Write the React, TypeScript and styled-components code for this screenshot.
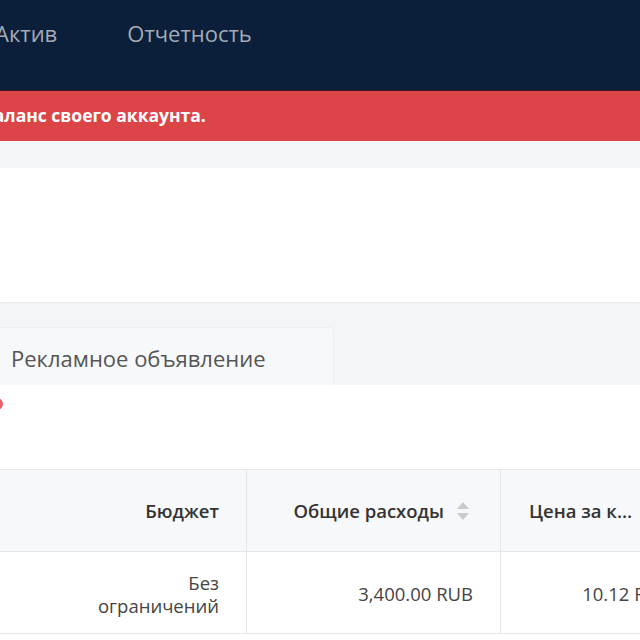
import React from 'react';
import styled, { createGlobalStyle } from 'styled-components';

const GlobalStyle = createGlobalStyle`
  html, body {
    margin: 0;
    padding: 0;
    background: #f4f5f8;
    font-family: 'Open Sans', 'Noto Sans', sans-serif;
  }
  * {
    box-sizing: border-box;
  }
`;

const Page = styled.div`
  width: 640px;
  height: 640px;
  overflow: hidden;
  background: #f4f5f8;
`;

const NavBar = styled.div`
  height: 91px;
  background: #0b1f3b;
  display: flex;
  align-items: center;
  gap: 70px;
  padding-bottom: 24px;
  border-bottom: 1px solid #3a1624;
`;

const NavItem = styled.div<{ $shift?: number }>`
  color: #a3abb5;
  font-size: 22px;
  margin-left: ${(p) => p.$shift || 0}px;
  white-space: nowrap;
`;

const Alert = styled.div`
  height: 50px;
  background: #dc4548;
  display: flex;
  align-items: center;
  overflow: hidden;
  padding-bottom: 2px;
`;

const AlertText = styled.div`
  color: #fff;
  font-weight: 700;
  font-size: 17.5px;
  white-space: nowrap;
  margin-left: -244px;
`;

const Panel = styled.div`
  margin-top: 27px;
  height: 134px;
  background: #fff;
  box-shadow: 0 1px 2px rgba(0, 0, 0, 0.06);
`;

const TabRow = styled.div`
  margin-top: 25px;
  display: flex;
`;

const Tab = styled.div`
  width: 344px;
  height: 58px;
  margin-left: -10px;
  padding-left: 20px;
  padding-top: 2px;
  display: flex;
  align-items: center;
  background: #f7f8fa;
  border: 1px solid #eceef1;
  border-bottom: none;
  border-radius: 4px 4px 0 0;
  color: #555;
  font-size: 22px;
  white-space: nowrap;
`;

const Content = styled.div`
  background: #fff;
  height: 260px;
  padding-top: 6px;
`;

const RequiredDot = styled.div`
  width: 12px;
  height: 12px;
  margin-left: -9px;
  margin-top: 7px;
  border-radius: 50%;
  background: #e8626b;
`;

const Table = styled.div`
  margin-top: 59px;
  display: grid;
  grid-template-columns: 46px 201px 254px 200px;
  border-top: 1px solid #e4e6ea;
  border-bottom: 1px solid #e4e6ea;
`;

const Cell = styled.div<{ $head?: boolean; $last?: boolean }>`
  height: ${(p) => (p.$head ? 82 : 81)}px;
  background: ${(p) => (p.$head ? '#f7f8fa' : '#fff')};
  border-right: ${(p) => (p.$last ? 'none' : '1px solid #e4e6ea')};
  border-bottom: ${(p) => (p.$head ? '1px solid #e4e6ea' : 'none')};
  display: flex;
  align-items: center;
  justify-content: flex-end;
  padding: ${(p) => (p.$head ? '0 27px' : '2px 27px 0')};
  font-size: 18.5px;
  line-height: 23px;
  color: ${(p) => (p.$head ? '#333' : '#444')};
  font-weight: ${(p) => (p.$head ? 600 : 400)};
  text-align: right;
  white-space: nowrap;
  overflow: hidden;
`;

const HeadLast = styled(Cell)`
  justify-content: flex-start;
  padding-left: 28px;
`;

const DataLast = styled(Cell)`
  padding-right: 30px;
`;

const Clipped = styled.span`
  display: block;
  max-width: 104px;
  overflow: hidden;
  text-overflow: ellipsis;
`;

const SortIcon = styled.svg`
  margin-left: 12px;
  margin-right: 3px;
  flex-shrink: 0;
`;

const Sort = () => (
  <SortIcon width="14" height="20" viewBox="0 0 14 20">
    <path d="M7 1 L13 8 H1 Z" fill="#c8cacd" />
    <path d="M7 19 L13 12 H1 Z" fill="#c8cacd" />
  </SortIcon>
);

export default function App() {
  return (
    <Page>
      <GlobalStyle />
      <NavBar>
        <NavItem $shift={-5}>Актив</NavItem>
        <NavItem>Отчетность</NavItem>
      </NavBar>
      <Alert>
        <AlertText>Пожалуйста, пополните баланс своего аккаунта.</AlertText>
      </Alert>
      <Panel />
      <TabRow>
        <Tab>Рекламное объявление</Tab>
      </TabRow>
      <Content>
        <RequiredDot />
        <Table>
          <Cell $head />
          <Cell $head>Бюджет</Cell>
          <Cell $head>
            Общие расходы
            <Sort />
          </Cell>
          <HeadLast $head $last>
            <Clipped>Цена за клик</Clipped>
          </HeadLast>
          <Cell />
          <Cell>
            Без
            <br />
            ограничений
          </Cell>
          <Cell>3,400.00 RUB</Cell>
          <DataLast $last>10.12 RUB</DataLast>
        </Table>
      </Content>
    </Page>
  );
}
